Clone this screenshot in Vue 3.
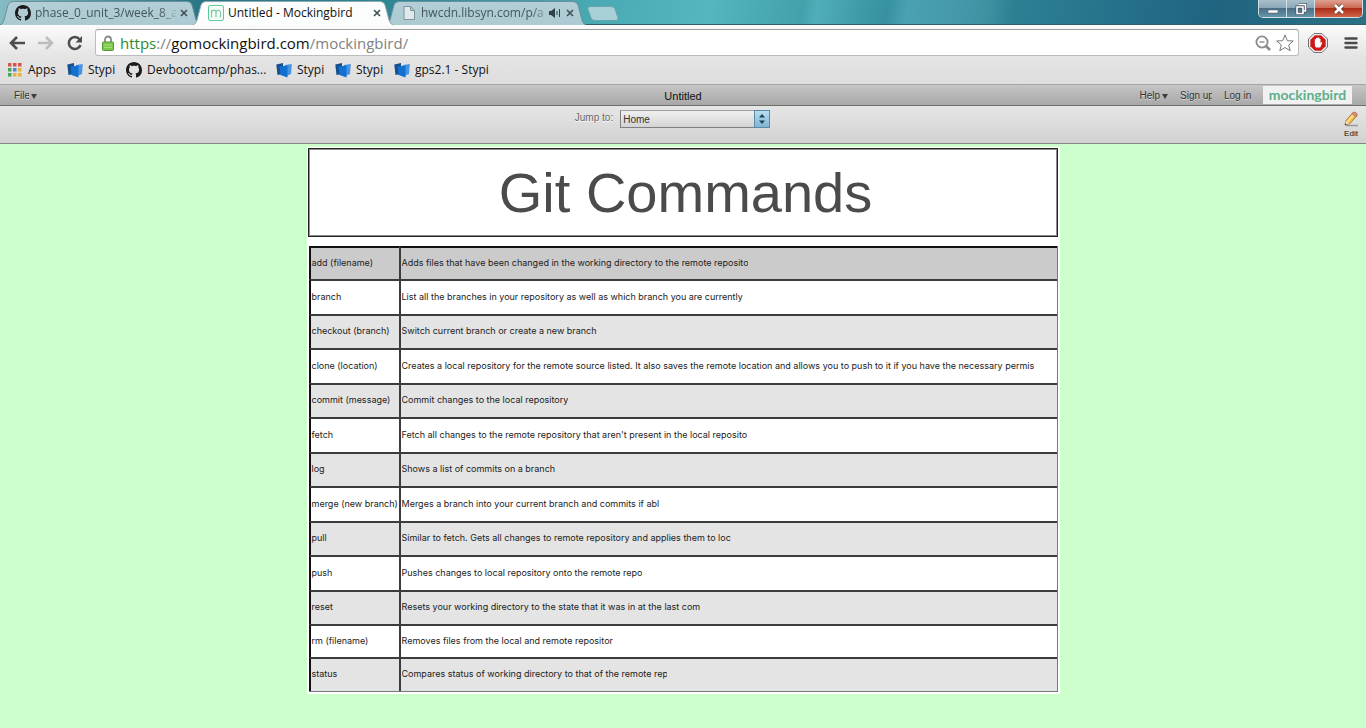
<script setup>
import { ref } from 'vue'

const tabs = [
  { title: 'phase_0_unit_3/week_8_ar', icon: 'github', width: 141, fade: true },
  { title: 'Untitled - Mockingbird', icon: 'mock', width: 139, active: true },
  { title: 'hwcdn.libsyn.com/p/a', icon: 'page', width: 126, sound: true, fade: true },
]

const bookmarks = [
  { label: 'Apps', icon: 'apps' },
  { label: 'Stypi', icon: 'stypi' },
  { label: 'Devbootcamp/phas...', icon: 'github' },
  { label: 'Stypi', icon: 'stypi' },
  { label: 'Stypi', icon: 'stypi' },
  { label: 'gps2.1 - Stypi', icon: 'stypi' },
]

// textClip is the width of a label box that cuts off its last letter
const commands = [
  { name: 'add (filename)', text: 'Adds files that have been changed in the working directory to the remote reposito', textClip: 346 },
  { name: 'branch', text: 'List all the branches in your repository as well as which branch you are currently' },
  { name: 'checkout (branch)', text: 'Switch current branch or create a new branch' },
  { name: 'clone (location)', text: 'Creates a local repository for the remote source listed. It also saves the remote location and allows you to push to it if you have the necessary permis' },
  { name: 'commit (message)', text: 'Commit changes to the local repository' },
  { name: 'fetch', text: "Fetch all changes to the remote repository that aren't present in the local reposito", textClip: 345 },
  { name: 'log', text: 'Shows a list of commits on a branch' },
  { name: 'merge (new branch)', text: 'Merges a branch into your current branch and commits if abl' },
  { name: 'pull', text: 'Similar to fetch. Gets all changes to remote repository and applies them to loc' },
  { name: 'push', text: 'Pushes changes to local repository onto the remote repo', textClip: 240 },
  { name: 'reset', text: 'Resets your working directory to the state that it was in at the last com' },
  { name: 'rm (filename)', text: 'Removes files from the local and remote repositor' },
  { name: 'status', text: 'Compares status of working directory to that of the remote rep', textClip: 265 },
]

const clip = (w) => (w ? { width: w + 'px' } : {})
const page = ref('Home')
</script>

<template>
  <div class="window">
    <svg class="defs" width="0" height="0" aria-hidden="true">
      <defs>
        <linearGradient id="inactive" x1="0" y1="0" x2="0" y2="1">
          <stop offset="0" stop-color="#b3ced6" />
          <stop offset="1" stop-color="#abcad2" />
        </linearGradient>
        <symbol id="github" viewBox="0 0 16 16">
          <path fill="#1b1b1b" d="M8 0C3.58 0 0 3.58 0 8c0 3.54 2.29 6.53 5.47 7.59.4.07.55-.17.55-.38 0-.19-.01-.82-.01-1.49-2.01.37-2.53-.49-2.69-.94-.09-.23-.48-.94-.82-1.13-.28-.15-.68-.52-.01-.53.63-.01 1.08.58 1.23.82.72 1.21 1.87.87 2.33.66.07-.52.28-.87.51-1.07-1.78-.2-3.64-.89-3.64-3.95 0-.87.31-1.59.82-2.15-.08-.2-.36-1.02.08-2.12 0 0 .67-.21 2.2.82.64-.18 1.32-.27 2-.27s1.36.09 2 .27c1.53-1.04 2.2-.82 2.2-.82.44 1.1.16 1.92.08 2.12.51.56.82 1.27.82 2.15 0 3.07-1.87 3.75-3.65 3.95.29.25.54.73.54 1.48 0 1.07-.01 1.93-.01 2.2 0 .21.15.46.55.38A8.01 8.01 0 0 0 16 8c0-4.42-3.58-8-8-8z" />
        </symbol>
        <symbol id="mock" viewBox="0 0 16 16">
          <rect x=".5" y=".5" width="15" height="15" rx="1.5" fill="#f6fffa" stroke="#5ecb96" />
          <path d="M3.5 12.500V5M3.500 7.500Q4 5.200 6 5.200T8 7.500V12.500M8 7.500Q8.500 5.200 10.300 5.200T12.500 7.500V12.500" fill="none" stroke="#7fc9a4" stroke-width="1.200" />
        </symbol>
        <symbol id="page" viewBox="0 0 16 16">
          <path d="M3 1.500H9.500L13.500 5.500V14.500H3ZM9.500 1.500V5.500H13.500" fill="#dde9ec" stroke="#7f9298" />
        </symbol>
        <symbol id="apps" viewBox="0 0 16 16">
          <g fill="#d9534a"><rect x="1" y="1" width="3.500" height="3.500" /><rect x="6" y="1" width="3.500" height="3.500" /><rect x="11" y="1" width="3.500" height="3.500" /></g>
          <g fill="#4a86e0"><rect x="6" y="6" width="3.500" height="3.500" /></g>
          <g fill="#4aa35a"><rect x="1" y="6" width="3.500" height="3.500" /><rect x="1" y="11" width="3.500" height="3.500" /></g>
          <g fill="#e8b23a"><rect x="11" y="6" width="3.500" height="3.500" /><rect x="6" y="11" width="3.500" height="3.500" /><rect x="11" y="11" width="3.500" height="3.500" /></g>
        </symbol>
        <symbol id="stypi" viewBox="0 0 16 16">
          <path d="M.300 2.500L7 1V12L1.500 13Z" fill="#164f8c" />
          <path d="M9 3L15.800 2L15 12L9 14.500Z" fill="#4795e0" />
          <path d="M3.500 4.500L11.500 3.500V15.500L4.500 13Z" fill="#1170d2" />
        </symbol>
      </defs>
    </svg>

    <header class="titlebar">
      <nav class="tabs" aria-label="Tabs">
        <div v-for="t in tabs" :key="t.title" class="tab" :class="{ active: t.active }">
          <svg class="tab-shape" viewBox="0 0 200 25" preserveAspectRatio="none">
            <path d="M0 25Q3 24 4 20L8 5Q9 1.500 13 1.500H187Q191 1.500 192 5L196 20Q197 24 200 25" :fill="t.active ? '#fcfdfd' : 'url(#inactive)'" :stroke="t.active ? '#8fa9ae' : '#6a9099'" />
          </svg>
          <svg class="icon"><use :href="'#' + t.icon" /></svg>
          <span class="tab-title" :class="{ fade: t.fade }" :style="clip(t.width)">{{ t.title }}</span>
          <svg v-if="t.sound" class="sound" viewBox="0 0 12 10"><path d="M0 3H2L6 0V10L2 7H0Z" fill="#2f4247" /><path d="M8 3V7M10.500 1V9" stroke="#2f4247" /></svg>
          <button class="close" aria-label="Close tab"><svg viewBox="0 0 8 8"><path d="M1 1L7 7M7 1L1 7" /></svg></button>
        </div>
        <button class="newtab" aria-label="New tab">
          <svg viewBox="0 0 32 15"><path d="M3 .500H24Q27 .500 28 3L31 12Q31.500 14.500 29 14.500H8Q5 14.500 4 12L.800 3Q.300 .500 3 .500Z" fill="#a9d0d7" stroke="#68a4ad" /></svg>
        </button>
      </nav>
      <div class="controls">
        <button class="win" aria-label="Minimize"><svg viewBox="0 0 16 12"><rect x="3" y="7" width="10" height="3" fill="#fff" stroke="#56616a" stroke-width=".600" /></svg></button>
        <button class="win" aria-label="Restore"><svg viewBox="0 0 16 12"><path d="M6 1.500H12.500V8H10.500M4 4H10V10.500H4Z" fill="none" stroke="#47545e" stroke-width="3" /><path d="M6 1.500H12.500V8H10.500M4 4H10V10.500H4Z" fill="none" stroke="#fff" stroke-width="1.600" /></svg></button>
        <button class="win red" aria-label="Close"><svg viewBox="0 0 16 12"><path d="M4 2L12 10M12 2L4 10" stroke="#5b3430" stroke-width="4" /><path d="M4 2L12 10M12 2L4 10" stroke="#fff" stroke-width="2.600" /></svg></button>
      </div>
    </header>

    <div class="chrome">
      <div class="navbar">
        <button class="nav" aria-label="Back"><svg viewBox="0 0 18 16"><path d="M17 8H3M9 2L3 8L9 14" fill="none" stroke="#4d4d4d" stroke-width="2.600" /></svg></button>
        <button class="nav" aria-label="Forward"><svg viewBox="0 0 18 16"><path d="M1 8H15M9 2L15 8L9 14" fill="none" stroke="#bdbdbd" stroke-width="2.600" /></svg></button>
        <button class="nav" aria-label="Reload"><svg viewBox="0 0 18 16"><path d="M13.500 4.200A6 6 0 1 0 14.500 10" fill="none" stroke="#4d4d4d" stroke-width="2.500" /><path d="M16 1V7.500H9.500Z" fill="#4d4d4d" /></svg></button>
        <div class="omnibox">
          <svg class="lock" viewBox="0 0 12 16"><path d="M3 8V4.500A3 3 0 0 1 9 4.500V8" fill="none" stroke="#8b8b8b" stroke-width="1.800" /><rect x=".500" y="7" width="11" height="8.500" rx="1" fill="#7cc84e" stroke="#559a2e" /><path d="M2 10H10M2 12.500H10" stroke="#a3e07c" /></svg>
          <div class="url"><span class="secure">https</span>://<span class="host">gomockingbird.com</span>/mockingbird/</div>
          <button class="mini" aria-label="Zoom"><svg viewBox="0 0 16 16"><circle cx="7" cy="7" r="5.600" fill="none" stroke="#8a8a8a" stroke-width="1.800" /><path d="M4.500 7H9.500" stroke="#8a8a8a" stroke-width="1.400" /><path d="M11 11L15 15" stroke="#8a8a8a" stroke-width="2.600" /></svg></button>
          <button class="mini star" aria-label="Bookmark"><svg viewBox="0 0 18 18"><path d="M9 1L11.300 6.700L17.300 7L12.700 10.900L14.200 16.700L9 13.500L3.800 16.700L5.300 10.900L.700 7L6.700 6.700Z" fill="#fff" stroke="#777" stroke-linejoin="round" /></svg></button>
        </div>
        <button class="ext" aria-label="Content blocker"><svg viewBox="0 0 20 20"><path d="M6 .600H14L19.400 6V14L14 19.400H6L.600 14V6Z" fill="#fff" stroke="#666" /><path d="M6.800 2.300H13.200L17.700 6.800V13.200L13.200 17.700H6.800L2.300 13.200V6.800Z" fill="#cf1717" /><path d="M6.800 10V6.500Q7.400 5.700 8 6.500V5.300Q8.800 4.300 9.500 5.300V4.800Q10.200 4 11 4.800V5.800Q11.800 5.100 12.500 6V10L13.600 9Q14.600 9 14.200 10L12.200 14.500H8Q6.500 13 6.800 10Z" fill="#fff" /></svg></button>
        <button class="ext menu" aria-label="Menu"><svg viewBox="0 0 14 14"><path d="M1.500 2.500H12.500M1.500 7H12.500M1.500 11.500H12.500" stroke="#4a4a4a" stroke-width="2.400" stroke-linecap="round" /></svg></button>
      </div>
      <nav class="bookmarks" aria-label="Bookmarks">
        <a v-for="(b, i) in bookmarks" :key="i" href="#" class="bookmark"><svg class="icon"><use :href="'#' + b.icon" /></svg>{{ b.label }}</a>
      </nav>
    </div>

    <div class="appbar">
      <button class="item file"><span class="cut" :style="clip(15)">File</span><i class="caret"></i></button>
      <strong class="doc">Untitled</strong>
      <div class="links">
        <button class="item">Help<i class="caret"></i></button>
        <a href="#" class="item cut" :style="clip(32)">Sign up</a>
        <a href="#" class="item cut" :style="clip(27)">Log in</a>
        <a href="#" class="logo">mockingbird</a>
      </div>
    </div>

    <div class="toolbar">
      <div class="jump">
        <label for="jump">Jump to:</label>
        <div class="select">
          <select id="jump" v-model="page"><option>Home</option></select>
          <span class="spin"><svg viewBox="0 0 8 10"><path d="M4 0L7 3.500H1ZM4 10L7 6.500H1Z" fill="#1d4058" /></svg></span>
        </div>
      </div>
      <button class="edit">
        <svg viewBox="0 0 16 16"><path d="M3 14.500H15" stroke="#999" stroke-width="1.500" /><path d="M2 14L3 9.500L10 1.500L14 4.500L6.500 13Z" fill="#f4bd4a" stroke="#a8762a" stroke-width=".900" /><path d="M9 2.800L10 1.500Q11.500 .500 13.200 1.800T14 4.500L12.800 6Z" fill="#de8a83" stroke="#a35a50" stroke-width=".600" /><path d="M4.800 10.500L10.300 4.200" stroke="#ffe39a" stroke-width="1.600" /><path d="M2 14L3 9.800L6.200 12.500Z" fill="#f6dfc0" /><path d="M1.800 14.300L2.300 12L3.800 13.500Z" fill="#444" /></svg>
        Edit
      </button>
    </div>

    <main class="canvas">
      <article class="sheet">
        <h1>Git Commands</h1>
        <table>
          <tbody>
            <tr v-for="c in commands" :key="c.name">
              <th scope="row">{{ c.name }}</th>
              <td><span class="cut" :style="clip(c.textClip)">{{ c.text }}</span></td>
            </tr>
          </tbody>
        </table>
      </article>
    </main>
  </div>
</template>

<style>
body { background: #ccffcc; }
</style>

<style scoped>
* { box-sizing: border-box; }
.window {
  display: flex;
  flex-direction: column;
  min-height: 100vh;
  font-family: "Liberation Sans", Arial, sans-serif;
  font-size: 10px;
}
.defs { position: absolute; }
svg { display: block; }
button {
  padding: 0;
  border: 0;
  background: none;
  font: inherit;
  color: inherit;
}
a { color: inherit; text-decoration: none; }
.icon { width: 16px; height: 16px; flex: none; }
.cut {
  display: inline-block;
  overflow: hidden;
  white-space: nowrap;
  vertical-align: middle;
}

.titlebar {
  display: flex;
  justify-content: space-between;
  align-items: flex-start;
  height: 25px;
  border-bottom: 1px solid #2f5f68;
  background: linear-gradient(100deg, #86bcc4 0, #4f97a4 90px, #2a7585 200px, #2f8795 390px, #49aab4 590px, #55b6c0 700px, #42a1ab 792px, #50aeba 806px, #3f9aa6 850px, #3791a0 875px, #4aa1b2 895px, #4193a4 970px, #2d8094 1000px, #25718b 1100px, #206480 1200px, #2b7286 1366px);
}
.tabs { display: flex; height: 25px; }
.tab {
  position: relative;
  display: flex;
  align-items: center;
  width: 200px;
  height: 25px;
  margin-right: -7px;
  padding-left: 15px;
  color: #44565b;
}
.tab.active { z-index: 1; color: #111; }
.tab-shape { position: absolute; inset: 0; z-index: -1; width: 100%; height: 100%; }
.tab:not(.active) { z-index: 0; }
.tab-title {
  flex: none;
  margin-left: 4px;
  overflow: hidden;
  white-space: nowrap;
  font: 12px/16px "Open Sans", "Noto Sans", sans-serif;
}
.fade { mask-image: linear-gradient(90deg, #000 88%, rgba(0, 0, 0, 0.2)); }
.sound { width: 12px; height: 10px; margin-left: 2px; }
.close { margin-left: auto; margin-right: 12px; }
.close svg { width: 8px; height: 8px; fill: none; stroke: #3f4f54; stroke-width: 1.600; }
.newtab { align-self: flex-start; margin: 6px 0 0 8px; }
.newtab svg { width: 32px; height: 15px; }
.controls {
  display: flex;
  height: 18px;
  margin-right: 3px;
  border: 1px solid #d2e0e6;
  border-top: 0;
  border-radius: 0 0 5px 5px;
  overflow: hidden;
}
.win {
  display: grid;
  place-items: center;
  width: 28px;
  border-right: 1px solid #d2e0e6;
  background: linear-gradient(#a9bfcb 0, #8aa8b8 45%, #4a6e84 50%, #6695aa 100%);
}
.win svg { width: 16px; height: 12px; }
.win.red {
  width: 47px;
  border: 0;
  background: linear-gradient(#e0a08f 0, #cb6a55 45%, #ad2c16 50%, #d0644a 100%);
}

.chrome {
  background: linear-gradient(#fbfbfb, #e4e4e4 32px, #dedede);
  border-bottom: 1px solid #a4a4a4;
}
.navbar {
  display: flex;
  align-items: center;
  height: 35px;
  padding: 0 8px;
}
.nav { margin-right: 11px; }
.nav svg { width: 18px; height: 16px; }
.omnibox {
  display: flex;
  flex: 1;
  align-items: center;
  height: 27px;
  padding: 0 4px 0 6px;
  border: 1px solid #bcbcbc;
  border-top-color: #9d9d9d;
  border-radius: 3px;
  background: #fff;
}
.lock { width: 12px; height: 16px; }
.url {
  flex: 1;
  margin-left: 6px;
  color: #828282;
  font: 15px/20px "Open Sans", "Noto Sans", sans-serif;
}
.secure { color: #2c8a2c; }
.host { color: #111; }
.mini svg { width: 16px; height: 16px; }
.star { margin-left: 5px; }
.star svg { width: 18px; height: 18px; }
.ext { margin-left: 9px; }
.ext svg { width: 20px; height: 20px; }
.ext.menu { margin-left: 16px; }
.ext.menu svg { width: 14px; height: 14px; }
.bookmarks {
  display: grid;
  grid-template-columns: 60px 59px 150px 59px 59px auto;
  justify-content: start;
  height: 24px;
  padding: 0 0 0 7px;
}
.bookmark {
  display: flex;
  align-items: center;
  height: 20px;
  gap: 5px;
  color: #111;
  white-space: nowrap;
  font: 12px/16px "Open Sans", "Noto Sans", sans-serif;
}

.appbar {
  display: grid;
  grid-template-columns: 1fr auto 1fr;
  align-items: center;
  height: 21px;
  padding: 0 14px;
  border-bottom: 1px solid #6e6e6e;
  background: linear-gradient(#c6c6c6, #a8a8a8);
  color: #333;
}
.item { padding-top: 2px; line-height: 14px; text-shadow: 0 1px 0 #d8d8d8; }
.file { justify-self: start; }
.caret {
  display: inline-block;
  margin-left: 2px;
  border: 3px solid transparent;
  border-top: 5px solid #3c3c3c;
  border-bottom: 0;
  vertical-align: middle;
}
.doc { color: #111; font-weight: 400; font-size: 11px; line-height: 14px; padding-top: 2px; }
.links { display: flex; justify-content: flex-end; align-items: center; gap: 12px; }
.logo {
  width: 89px;
  height: 18px;
  background: #f1f1f1;
  color: #5fae8a;
  text-align: center;
  font: 700 14px/17px Lato, sans-serif;
}

.toolbar {
  display: grid;
  grid-template-columns: 1fr auto 1fr;
  height: 38px;
  padding: 4px 7px 0 0;
  border-bottom: 1px solid #858585;
  background: linear-gradient(#e6e6e6, #d2d2d2);
}
.jump {
  grid-column: 2;
  display: flex;
  gap: 7px;
  margin-right: 14px;
  color: #666;
}
.jump label { line-height: 16px; text-shadow: 0 1px 0 #fff; }
.select { position: relative; width: 150px; height: 18px; }
select {
  width: 100%;
  height: 100%;
  padding: 0 2px;
  border: 1px solid #7f7f7f;
  border-top-color: #a0a0a0;
  border-radius: 0;
  appearance: none;
  background: linear-gradient(#f0f0f0, #d4d4d4);
  color: #333;
  font: inherit;
}
.spin {
  position: absolute;
  top: 0;
  right: 0;
  display: grid;
  place-items: center;
  width: 16px;
  height: 18px;
  border: 1px solid #5b8aa6;
  background: linear-gradient(#b9ddf0, #7fb5d3);
  pointer-events: none;
}
.spin svg { width: 8px; height: 10px; }
.edit {
  justify-self: end;
  align-self: start;
  display: flex;
  flex-direction: column;
  align-items: center;
  color: #111;
  font-size: 8px;
  line-height: 12px;
}
.edit svg { width: 16px; height: 16px; margin: 1px 0; }

.canvas { flex: 1; padding: 3px 0 0; background: #ccffcc; }
.sheet {
  max-width: 753px;
  margin: 0 auto;
  padding: 1px 2px 2px 1px;
  background: #fff;
}
h1 {
  margin: 0;
  padding: 12px 0 11px 6px;
  border: 1px solid #222;
  box-shadow: inset 0 0 0 1px #8c8c8c;
  color: #4b4b4b;
  text-align: center;
  font-weight: 400;
  font-size: 56px;
  line-height: 64px;
}
table {
  width: calc(100% - 1px);
  margin: 9px 0 0 1px;
  border-spacing: 0;
  border-right: 1px solid #777;
  border-bottom: 1px solid #777;
  table-layout: fixed;
}
tr { height: 34px; background: #e4e4e4; }
tr:nth-child(even) { height: 35px; background: #fff; }
tr:first-child { height: 33px; background: #cbcbcb; }
tr:nth-child(12) { height: 33px; }
th, td {
  padding: 0 0 2px 1px;
  border-top: 2px solid #3c3c3c;
  border-left: 2px solid #3c3c3c;
  color: #222;
  text-align: left;
  white-space: nowrap;
  font: 9px/12px Inter, "Liberation Sans", sans-serif;
}
th { width: 90px; border-left-color: #111; }
tr:first-child > * { border-top-color: #111; }
</style>
